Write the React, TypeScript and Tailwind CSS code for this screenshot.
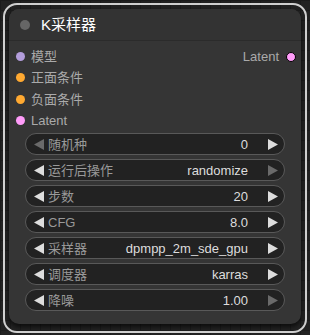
const font = "font-['Liberation_Sans','Noto_Sans_CJK_SC',sans-serif]";

const inputs = [
	{ label: "模型", color: "bg-[#b39ddb]" },
	{ label: "正面条件", color: "bg-[#ffa931]" },
	{ label: "负面条件", color: "bg-[#ffa931]" },
	{ label: "Latent", color: "bg-[#ff9cf9]" },
];

const widgets = [
	{ label: "随机种", value: "0", leftOff: true, rightOff: false },
	{ label: "运行后操作", value: "randomize", leftOff: false, rightOff: true },
	{ label: "步数", value: "20", leftOff: false, rightOff: false },
	{ label: "CFG", value: "8.0", leftOff: false, rightOff: false },
	{ label: "采样器", value: "dpmpp_2m_sde_gpu", leftOff: false, rightOff: false },
	{ label: "调度器", value: "karras", leftOff: false, rightOff: false },
	{ label: "降噪", value: "1.00", leftOff: false, rightOff: true },
];

const Arrow = ({ dir, off }: { dir: "left" | "right"; off: boolean }) => (
	<svg width="10" height="11" viewBox="0 0 10 11" className="shrink-0">
		<path
			d={dir === "left" ? "M10 0 L10 11 L0 5.5 Z" : "M0 0 L0 11 L10 5.5 Z"}
			fill={off ? "#6a6a6a" : "#dddddd"}
		/>
	</svg>
);

export default function App() {
	return (
		<div
			className={`${font} w-[310px] h-[335px] p-[3px] bg-[#222222] bg-[image:linear-gradient(#1b1b1b_1px,transparent_1px),linear-gradient(90deg,#1b1b1b_1px,transparent_1px)] bg-[size:10px_10px]`}
		>
			<div className="w-[304px] h-[330px] rounded-[14px] border-2 border-[#d0d0d0] pt-[4px] pl-[4px]">
				<div className="w-[292px] h-[315px] rounded-[10px] bg-[#353535] shadow-[0_3px_4px_rgba(0,0,0,0.6)] flex flex-col overflow-hidden">
					{/* title */}
					<div className="h-[32px] shrink-0 flex items-center gap-[11px] pl-[11px] bg-[#333333] border-b border-[#2b2b2b]">
						<div className="w-[10px] h-[10px] rounded-full bg-[#666666]" />
						<span className="text-[15px] text-white leading-none">K采样器</span>
					</div>

					{/* slots */}
					<div className="flex flex-col pt-[5px]">
						{inputs.map((inp, i) => (
							<div key={inp.label} className="h-[21.3px] flex items-center pl-[7px] pr-[5px]">
								<div className={`w-[9px] h-[9px] rounded-full ${inp.color}`} />
								<span className="ml-[6px] text-[13px] text-[#aaaaaa] leading-none">{inp.label}</span>
								{i === 0 && (
									<>
										<span className="ml-auto text-[13px] text-[#aaaaaa] leading-none">Latent</span>
										<div className="ml-[7px] w-[10px] h-[10px] rounded-full bg-[#ff9cf9] border border-black" />
									</>
								)}
							</div>
						))}
					</div>

					{/* widgets */}
					<div className="flex flex-col gap-[4px] pl-[16px] pt-[2px]">
						{widgets.map((w) => (
							<div
								key={w.label}
								className="w-[260px] h-[22px] rounded-full bg-[#222222] border border-[#595959] flex items-center pl-[8px] pr-[6px]"
							>
								<Arrow dir="left" off={w.leftOff} />
								<span className="ml-[4px] text-[13px] text-[#999999] leading-none">{w.label}</span>
								<span className="ml-auto text-[13px] text-[#dddddd] leading-none">{w.value}</span>
								<div className="ml-[20px]">
									<Arrow dir="right" off={w.rightOff} />
								</div>
							</div>
						))}
					</div>
				</div>
			</div>
		</div>
	);
}
